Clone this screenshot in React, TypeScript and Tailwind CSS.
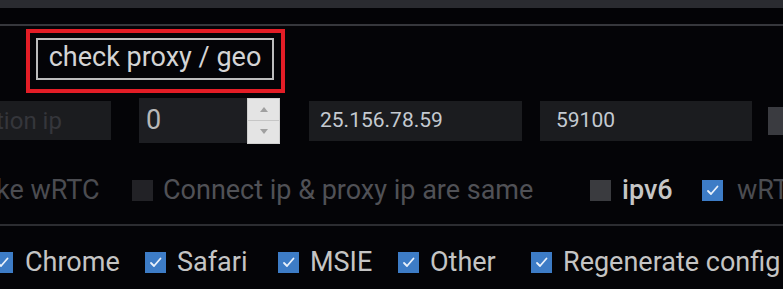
import React from 'react';

const Check: React.FC<{ tone: 'blue' | 'dark' | 'mid' }> = ({ tone }) => {
  if (tone === 'blue') {
    return (
      <div className="w-[21px] h-[21px] shrink-0 bg-[#3d7cc6] flex items-center justify-center">
        <svg width="15" height="15" viewBox="0 0 15 15" fill="none">
          <path d="M3 8 L6 11 L12.5 3.5" stroke="#e8f0fa" strokeWidth="1.8" strokeLinecap="round" strokeLinejoin="round" />
        </svg>
      </div>
    );
  }
  return (
    <div
      className={
        tone === 'dark'
          ? 'w-[21px] h-[21px] shrink-0 bg-[#222226]'
          : 'w-[21px] h-[21px] shrink-0 bg-[#3a3b3f]'
      }
    />
  );
};

const Spinner: React.FC = () => (
  <div className="w-[33px] h-[46px] shrink-0 bg-[#e4e4e4] border border-[#cfcfcf] flex flex-col">
    <div className="flex-1 flex items-center justify-center border-b border-[#c6c6c6]">
      <svg width="8" height="5" viewBox="0 0 8 5">
        <path d="M4 0 L8 5 L0 5 Z" fill="#a0a0a0" />
      </svg>
    </div>
    <div className="flex-1 flex items-center justify-center">
      <svg width="8" height="5" viewBox="0 0 8 5">
        <path d="M0 0 L8 0 L4 5 Z" fill="#a0a0a0" />
      </svg>
    </div>
  </div>
);

export default function App() {
  return (
    <div
      className="w-[783px] h-[289px] overflow-hidden bg-[#040407] flex flex-col"
      style={{ fontFamily: 'Roboto, "Noto Sans", sans-serif' }}
    >
      <div className="h-[8px] bg-[#2a2b30]" />
      <div className="h-[16px] bg-[#030306]" />
      <div className="h-[2px] bg-[#36373c]" />

      {/* check proxy button */}
      <div className="mt-[3px] pl-[26px] flex">
        <div className="w-[259px] h-[64px] border-4 border-[#e31d26] pl-[6px] pt-[5px]">
          <div className="w-[238px] h-[42px] border-2 border-[#bdbdbd] flex items-center justify-center text-[27px] text-[#d4d4d4] leading-none pb-[3px] whitespace-nowrap">
            check proxy / geo
          </div>
        </div>
      </div>

      {/* inputs row */}
      <div className="mt-[4px] h-[47px] flex items-center">
        <div className="w-[111px] h-[39px] shrink-0 bg-[#1b1c1f] flex items-center overflow-hidden">
          <span className="ml-[-4px] text-[24px] text-[#35363b] whitespace-nowrap">tion ip</span>
        </div>
        <div className="ml-[28px] flex items-center shrink-0">
          <div className="w-[108px] h-[45px] bg-[#1d1e22] flex items-center pl-[7px] text-[27px] text-[#b8b8b8]">0</div>
          <Spinner />
        </div>
        <div className="ml-[29px] w-[213px] h-[40px] shrink-0 bg-[#1b1c1f] flex items-center pl-[11px] text-[21px] text-[#c4cad1]">
          25.156.78.59
        </div>
        <div className="ml-[18px] w-[212px] h-[40px] shrink-0 bg-[#1b1c1f] flex items-center pl-[16px] text-[21px] text-[#c4cad1]">
          59100
        </div>
        <div className="ml-[16px] w-[20px] h-[28px] shrink-0 bg-[#3a3b40]" />
      </div>

      {/* options row */}
      <div className="mt-[24px] h-[44px] flex items-center text-[27px] whitespace-nowrap">
        <div className="w-[132px] shrink-0 overflow-hidden">
          <span className="ml-[-4px] block text-[#4b4c51]">ke wRTC</span>
        </div>
        <div className="w-[458px] shrink-0 flex items-center gap-[10px]">
          <Check tone="dark" />
          <span className="text-[#505156]">Connect ip &amp; proxy ip are same</span>
        </div>
        <div className="w-[112px] shrink-0 flex items-center gap-[11px]">
          <Check tone="mid" />
          <span className="text-[#c6c6c6] font-medium">ipv6</span>
        </div>
        <div className="shrink-0 flex items-center gap-[14px]">
          <Check tone="blue" />
          <span className="text-[#4b4c51]">wRTC</span>
        </div>
      </div>

      <div className="mt-[12px] h-[2px] bg-[#2c2d31]" />

      {/* browsers row */}
      <div className="mt-[14px] h-[44px] flex items-center text-[27px] text-[#c4c4c4] whitespace-nowrap ml-[-8px]">
        <div className="w-[153px] shrink-0 flex items-center gap-[12px]">
          <Check tone="blue" />
          <span>Chrome</span>
        </div>
        <div className="w-[133px] shrink-0 flex items-center gap-[11px]">
          <Check tone="blue" />
          <span>Safari</span>
        </div>
        <div className="w-[120px] shrink-0 flex items-center gap-[11px]">
          <Check tone="blue" />
          <span>MSIE</span>
        </div>
        <div className="w-[133px] shrink-0 flex items-center gap-[11px]">
          <Check tone="blue" />
          <span>Other</span>
        </div>
        <div className="shrink-0 flex items-center gap-[11px]">
          <Check tone="blue" />
          <span>Regenerate config</span>
        </div>
      </div>
    </div>
  );
}
